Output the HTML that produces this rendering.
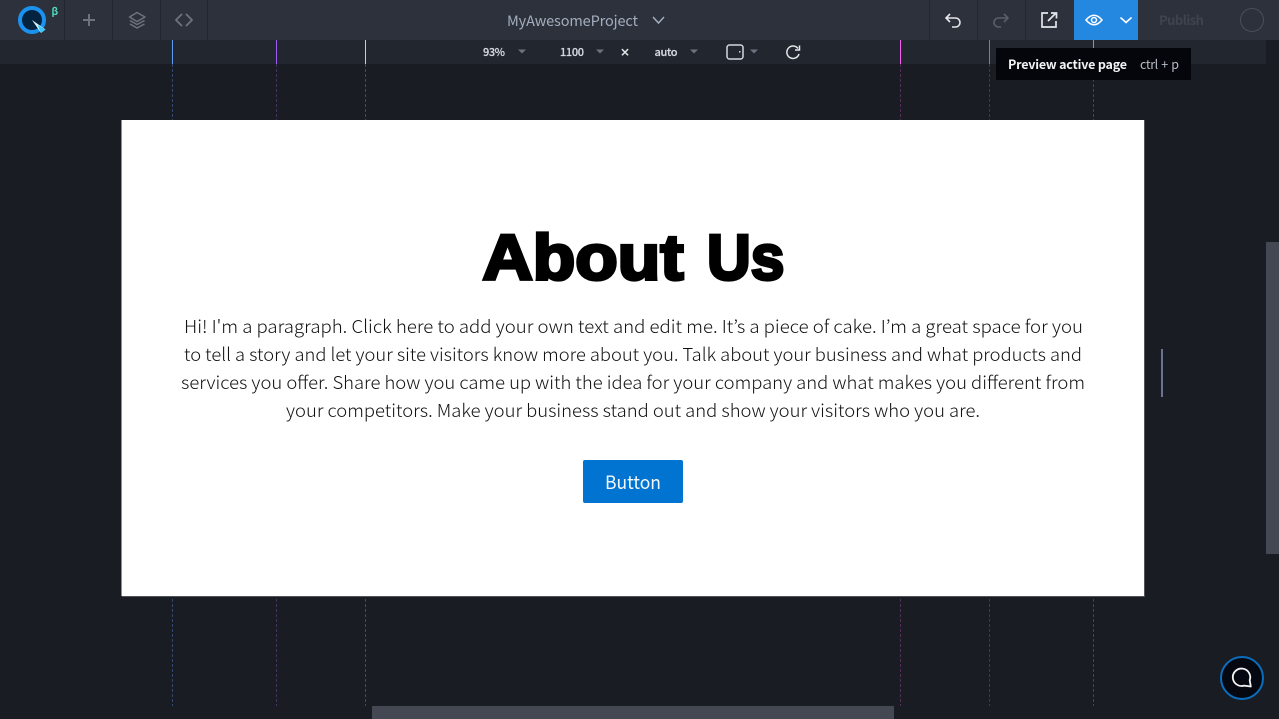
<!DOCTYPE html>
<html lang="en"><head><meta charset="utf-8"><title>MyAwesomeProject</title>
<style>
html,body{margin:0;padding:0;width:1279px;height:719px;overflow:hidden;background:#191c23}
svg{position:absolute;left:0;top:0;display:block}
text{font-family:"Noto Sans CJK JP","Liberation Sans",sans-serif}
.p{font-family:"Noto Sans CJK JP","Liberation Sans",sans-serif;font-weight:300;font-size:18px;fill:#111}
.t{font-size:11px;fill:#d5d8de;font-weight:500;stroke:#d5d8de;stroke-width:.2}
.h{font-family:"Liberation Sans",sans-serif;font-size:64px;font-weight:700;fill:#000;stroke:#000;stroke-width:3.200px}
</style></head><body>
<svg width="1279" height="719" viewBox="0 0 1279 719" xmlns="http://www.w3.org/2000/svg">
<rect width="1279" height="719" fill="#191c23"/>
<rect x="0" y="40" width="1266" height="24" fill="#22262e"/>
<g stroke-width="1">
<path d="M172.500 40V64" stroke="#5d9df5"/><path d="M172.500 64V706" stroke="#33496d" stroke-dasharray="3 2"/>
<path d="M276.500 40V64" stroke="#9a5cf5"/><path d="M276.500 64V706" stroke="#43345f" stroke-dasharray="3 2"/>
<path d="M365.500 40V64" stroke="#c9ccd2"/><path d="M365.500 64V706" stroke="#474a51" stroke-dasharray="3 2"/>
<path d="M900.500 40V64" stroke="#f55cf0"/><path d="M900.500 64V706" stroke="#562f58" stroke-dasharray="3 2"/>
<path d="M989.500 40V64" stroke="#9a5cf5"/><path d="M989.500 64V706" stroke="#43345f" stroke-dasharray="3 2"/>
<path d="M1093.500 40V64" stroke="#5d9df5"/><path d="M1093.500 64V706" stroke="#33496d" stroke-dasharray="3 2"/>
</g>
<rect x="0" y="0" width="1279" height="40" fill="#2d313b"/>
<path d="M64.500 0V40M112.500 0V40M160.500 0V40M207.500 0V40M929.500 0V40M977.500 0V40M1025.500 0V40" stroke="#23262e"/>
<!-- logo -->
<circle cx="32" cy="20" r="12" fill="#04233f" stroke="#1c92f0" stroke-width="4"/>
<path d="M32 20L45.500 29.500L41 33Z" fill="#d8f6ff"/>
<path d="M37.500 25L45.500 29.500L41 33Z" fill="#3cc8ff"/>
<text x="51.500" y="15" font-size="10" font-weight="700" fill="#4fe0c0">β</text>
<!-- plus, layers, code -->
<path d="M89 14V26M83 20H95" stroke="#6e727b" stroke-width="2"/>
<g fill="none" stroke="#6e727b" stroke-width="1.500" stroke-linejoin="round"><path d="M137 12.500L145 17L137 21.500L129.500 17Z"/><path d="M130 20.500L137 24.500L144.500 20.500"/><path d="M130 24L137 28L144.500 24"/></g>
<path d="M182 14L176 20L182 26M186 14L192 20L186 26" fill="none" stroke="#6e727b" stroke-width="1.800"/>
<!-- title -->
<text x="507" y="26" font-size="14.500" fill="#a3adbd" textLength="131" lengthAdjust="spacing">MyAwesomeProject</text>
<path d="M653 17L658.500 23L664 17" fill="none" stroke="#a3adbd" stroke-width="1.500"/>
<!-- subbar -->
<text class="t" x="483" y="56" textLength="22">93%</text>
<path d="M518 49.500H526L522 53.500Z" fill="#6c7280"/>
<text class="t" x="560" y="56" textLength="24">1100</text>
<path d="M596 49.500H604L600 53.500Z" fill="#6c7280"/>
<text x="620" y="56" font-size="10" font-weight="700" fill="#e4e6ea" stroke="#e4e6ea" stroke-width=".4">×</text>
<text class="t" x="654.500" y="56" textLength="23">auto</text>
<path d="M690 49.500H698L694 53.500Z" fill="#6c7280"/>
<rect x="727" y="45" width="16" height="14" rx="2.500" fill="none" stroke="#d5d8de" stroke-width="1.500"/>
<rect x="739" y="51" width="1.500" height="1.500" fill="#d5d8de"/>
<path d="M750 49.500H758L754 53.500Z" fill="#6c7280"/>
<path d="M798 48.500A6.200 6.200 0 1 0 799 54" fill="none" stroke="#e4e6ea" stroke-width="1.500"/>
<path d="M799.500 45.500V50H795" fill="none" stroke="#e4e6ea" stroke-width="1.500"/>
<!-- undo/redo/export -->
<path d="M950 14L946 18L950 22M946 18H955.500A4.500 4.500 0 0 1 955.500 27H952" fill="none" stroke="#e4e6ea" stroke-width="1.600"/>
<path d="M1004 14L1008 18L1004 22M1008 18H998.500A4.500 4.500 0 0 0 998.500 27H1001" fill="none" stroke="#5a5e68" stroke-width="1.600"/>
<path d="M1048 13H1042V27H1056V21" fill="none" stroke="#e4e6ea" stroke-width="1.700"/>
<path d="M1048 21L1056 13M1051 13H1056.500V18.500" fill="none" stroke="#e4e6ea" stroke-width="1.700"/>
<!-- preview -->
<rect x="1074" y="0" width="64" height="40" fill="#2487e0"/>
<path d="M1086 20Q1094 10.500 1102 20Q1094 29.500 1086 20Z" fill="none" stroke="#fff" stroke-width="1.600"/>
<circle cx="1094" cy="20" r="2.500" fill="none" stroke="#fff" stroke-width="1.500"/>
<path d="M1120.500 17.500L1126 22.500L1131.500 17.500" fill="none" stroke="#fff" stroke-width="1.600"/>
<text x="1159" y="25" font-size="13" font-weight="700" fill="#3f434d" textLength="45">Publish</text>
<circle cx="1252" cy="20" r="11.500" fill="none" stroke="#4a4e58"/>
<!-- scrollbars -->
<rect x="1266" y="242" width="13" height="312" fill="#444852"/>
<rect x="372" y="706" width="522" height="13" fill="#444852"/>
<rect x="1161" y="349" width="2" height="48" fill="#6a7391"/>
<!-- tooltip -->
<rect x="996" y="48" width="195" height="32" rx="1" fill="#04060c"/>
<text x="1008" y="69" font-size="12.500" font-weight="700" fill="#f2f3f5" textLength="119">Preview active page</text>
<text x="1140" y="69" font-size="12.500" fill="#b7bcc6" word-spacing="1" textLength="39">ctrl + p</text>
<!-- page -->
<rect x="121.500" y="120" width="1022.500" height="476" fill="#fff"/>
<path d="M1144.500 120V596M122 596.500H1145" stroke="#50535a"/>
<text class="h" x="482.500" y="279.500" textLength="201" lengthAdjust="spacingAndGlyphs">About</text>
<text class="h" x="707" y="279.500" textLength="77.500" lengthAdjust="spacingAndGlyphs">Us</text>
<text class="p" x="184" y="333" textLength="899" lengthAdjust="spacingAndGlyphs">Hi! I'm a paragraph. Click here to add your own text and edit me. It’s a piece of cake. I’m a great space for you</text>
<text class="p" x="184" y="361" textLength="898" lengthAdjust="spacingAndGlyphs">to tell a story and let your site visitors know more about you. Talk about your business and what products and</text>
<text class="p" x="181" y="389" textLength="904" lengthAdjust="spacingAndGlyphs">services you offer. Share how you came up with the idea for your company and what makes you different from</text>
<text class="p" x="286" y="417" textLength="694" lengthAdjust="spacingAndGlyphs">your competitors. Make your business stand out and show your visitors who you are.</text>
<rect x="583" y="460" width="100" height="43" rx="2" fill="#0074d0"/>
<text x="605" y="489" font-size="18.500" fill="#f2f8fd" textLength="56" lengthAdjust="spacingAndGlyphs">Button</text>
<!-- chat -->
<circle cx="1242" cy="678" r="21" fill="#050811" stroke="#0a6ebd" stroke-width="2"/>
<path d="M1244 685.600A8.700 8.700 0 1 1 1249.700 680.200L1250.800 686.500Z" fill="none" stroke="#f2f3f5" stroke-width="1.800" stroke-linejoin="round"/>
</svg>
</body></html>
